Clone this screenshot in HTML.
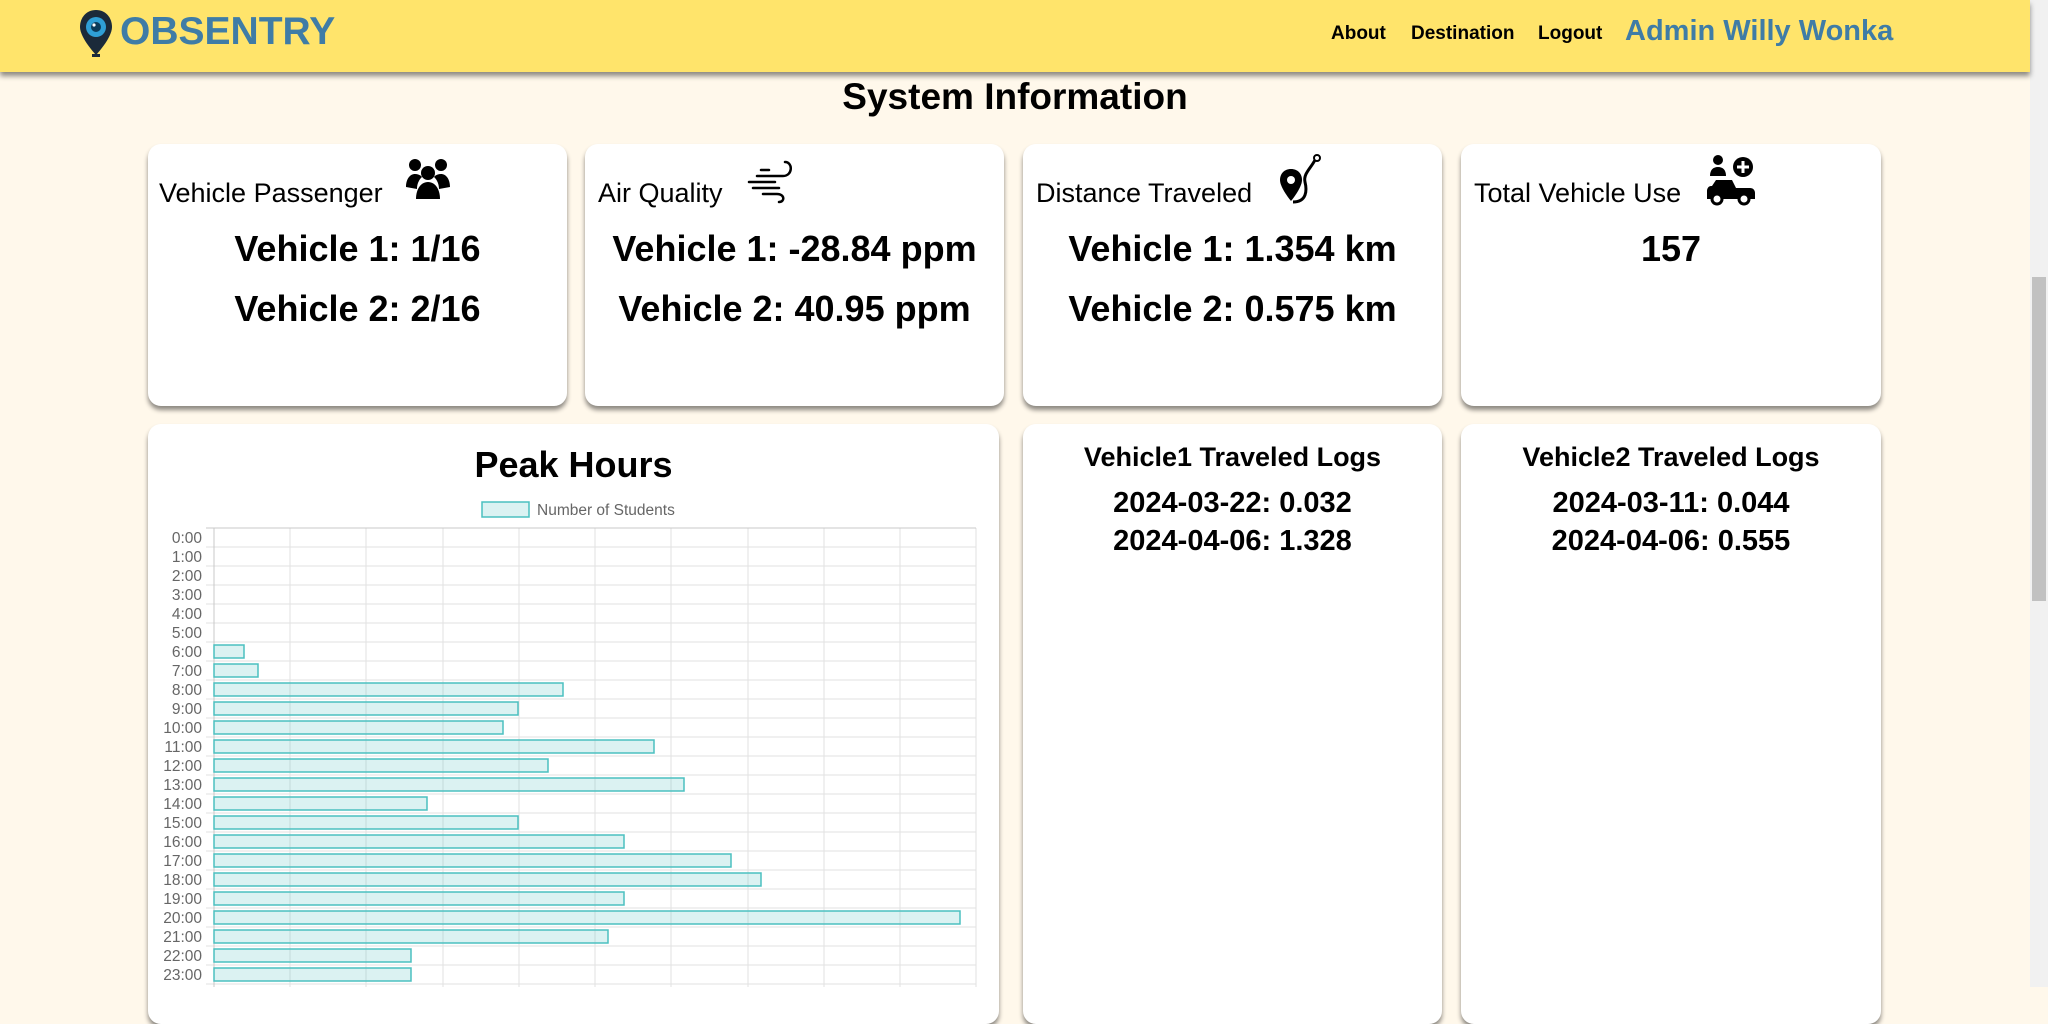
<!DOCTYPE html>
<html><head><meta charset="utf-8"><style>
*{margin:0;padding:0;box-sizing:border-box}
body{width:2048px;height:987px;overflow:hidden;background:#fff8eb;font-family:"Liberation Sans",sans-serif;position:relative;color:#000}
.hdr{position:absolute;left:0;top:0;width:2030px;height:72px;background:#ffe46b;box-shadow:0 4px 5px rgba(0,0,0,.45);z-index:2}
.abs{position:absolute;white-space:nowrap}
.card{position:absolute;background:#fff;border-radius:13px;box-shadow:0 4px 5px rgba(0,0,0,.45)}
.ct{position:absolute;font-size:27px;white-space:nowrap}
.val{position:absolute;left:0;right:0;text-align:center;font-size:36px;font-weight:bold}
.lt{position:absolute;left:0;right:0;text-align:center;font-size:27px;font-weight:bold;top:18px}
.le{position:absolute;left:0;right:0;text-align:center;font-size:29px;font-weight:bold}
.sb{position:absolute;left:2030px;top:0;width:18px;height:987px;background:#f1f1f1}
.th{position:absolute;left:2032px;top:277px;width:14px;height:324px;background:#c1c1c1}
</style></head><body>
<div class="hdr">
<svg class="abs" style="left:78px;top:8px" width="36" height="52" viewBox="0 0 36 52"><path d="M18 2C8 2 2 10 2 19c0 11 16 28 16 28s16-17 16-28C34 10 28 2 18 2z" fill="#1b2a3a"/><circle cx="18" cy="19" r="10" fill="#2f9fd6"/><circle cx="18" cy="19" r="5" fill="#0c3b5a"/><circle cx="16" cy="17" r="1.6" fill="#fff"/><rect x="14" y="46" width="8" height="3" fill="#1b2a3a"/></svg>
<div class="abs" style="left:120px;top:10px;font-size:39px;font-weight:bold;color:#3f7ca6">OBSENTRY</div>
<div class="abs" style="left:1331px;top:23px;font-size:19px;font-weight:bold">About</div>
<div class="abs" style="left:1411px;top:23px;font-size:19px;font-weight:bold">Destination</div>
<div class="abs" style="left:1538px;top:23px;font-size:19px;font-weight:bold">Logout</div>
<div class="abs" style="left:1625px;top:15px;font-size:29px;font-weight:bold;color:#3f7ca6">Admin Willy Wonka</div>
</div>
<div class="sb"></div><div class="th"></div>
<div class="abs" style="left:0;width:2030px;text-align:center;top:76px;font-size:37px;font-weight:bold">System Information</div>

<div class="card" style="left:148px;top:144px;width:419px;height:262px">
<div class="ct" style="left:11px;top:34px">Vehicle Passenger</div>
<svg class="abs" style="left:256px;top:13px" width="48" height="44" viewBox="0 0 48 44"><circle cx="11" cy="8" r="6"/><circle cx="37" cy="8" r="6"/><circle cx="24" cy="16" r="7"/><path d="M2 30c0-8 4-13 9-13s7 3 7 3-5 4-5 12z"/><path d="M46 30c0-8-4-13-9-13s-7 3-7 3 5 4 5 12z"/><path d="M12 42c0-10 5-17 12-17s12 7 12 17z"/></svg>
<div class="val" style="top:84px">Vehicle 1: 1/16</div>
<div class="val" style="top:144px">Vehicle 2: 2/16</div>
</div>
<div class="card" style="left:585px;top:144px;width:419px;height:262px">
<div class="ct" style="left:13px;top:34px">Air Quality</div>
<svg class="abs" style="left:162px;top:16px" width="50" height="44" viewBox="0 0 50 44" fill="none" stroke="#000" stroke-width="2.5" stroke-linecap="round"><path d="M14 10h8M10 16h26c10 0 10-14 2-14"/><path d="M2 22h26M6 28h26"/><path d="M16 34h14c8 0 8 8 2 8"/></svg>
<div class="val" style="top:84px">Vehicle 1: -28.84 ppm</div>
<div class="val" style="top:144px">Vehicle 2: 40.95 ppm</div>
</div>
<div class="card" style="left:1023px;top:144px;width:419px;height:262px">
<div class="ct" style="left:13px;top:34px">Distance Traveled</div>
<svg class="abs" style="left:256px;top:9px" width="44" height="52" viewBox="0 0 44 52"><path d="M12 16C5 16 1 21 1 27c0 8 11 21 11 21s11-13 11-21c0-6-4-11-11-11z"/><circle cx="12" cy="27" r="4" fill="#fff"/><path d="M14 49c14 0 14-12 12-20s6-14 10-22" fill="none" stroke="#000" stroke-width="3"/><circle cx="38" cy="5" r="3" fill="none" stroke="#000" stroke-width="2"/></svg>
<div class="val" style="top:84px">Vehicle 1: 1.354 km</div>
<div class="val" style="top:144px">Vehicle 2: 0.575 km</div>
</div>
<div class="card" style="left:1461px;top:144px;width:420px;height:262px">
<div class="ct" style="left:13px;top:34px">Total Vehicle Use</div>
<svg class="abs" style="left:245px;top:10px" width="50" height="52" viewBox="0 0 50 52"><circle cx="12" cy="6" r="5"/><path d="M4 22c0-6 3-9 8-9s8 3 8 9z"/><circle cx="37" cy="13" r="10"/><path d="M37 7v12M31 13h12" stroke="#fff" stroke-width="3"/><path d="M10 26h16l4 8h14c3 0 5 2 5 5v6H1v-8c0-3 2-5 4-5h1z"/><circle cx="11" cy="45" r="5" fill="#fff" stroke="#000" stroke-width="3"/><circle cx="38" cy="45" r="5" fill="#fff" stroke="#000" stroke-width="3"/></svg>
<div class="val" style="top:84px">157</div>
</div>

<div class="card" style="left:148px;top:424px;width:851px;height:600px">
<div class="abs" style="left:0;right:0;text-align:center;top:20px;font-size:36px;font-weight:bold">Peak Hours</div>
<svg class="abs" style="left:0;top:0" width="851" height="563" font-family="Liberation Sans" font-size="15.5" fill="#666">
<rect x="334" y="78" width="47" height="15" fill="rgba(75,192,192,0.2)" stroke="rgb(75,192,192)" stroke-width="1.5"/>
<text x="389" y="91">Number of Students</text>
<g stroke="#e2e2e2" stroke-width="1">
<line x1="142" y1="104" x2="142" y2="563"/><line x1="218" y1="104" x2="218" y2="563"/><line x1="295" y1="104" x2="295" y2="563"/><line x1="371" y1="104" x2="371" y2="563"/><line x1="447" y1="104" x2="447" y2="563"/><line x1="523" y1="104" x2="523" y2="563"/><line x1="600" y1="104" x2="600" y2="563"/><line x1="676" y1="104" x2="676" y2="563"/><line x1="752" y1="104" x2="752" y2="563"/><line x1="828" y1="104" x2="828" y2="563"/>
<line x1="58" y1="123" x2="828" y2="123"/><line x1="58" y1="142" x2="828" y2="142"/><line x1="58" y1="161" x2="828" y2="161"/><line x1="58" y1="180" x2="828" y2="180"/><line x1="58" y1="199" x2="828" y2="199"/><line x1="58" y1="218" x2="828" y2="218"/><line x1="58" y1="237" x2="828" y2="237"/><line x1="58" y1="256" x2="828" y2="256"/><line x1="58" y1="275" x2="828" y2="275"/><line x1="58" y1="294" x2="828" y2="294"/><line x1="58" y1="313" x2="828" y2="313"/><line x1="58" y1="332" x2="828" y2="332"/><line x1="58" y1="351" x2="828" y2="351"/><line x1="58" y1="370" x2="828" y2="370"/><line x1="58" y1="389" x2="828" y2="389"/><line x1="58" y1="408" x2="828" y2="408"/><line x1="58" y1="427" x2="828" y2="427"/><line x1="58" y1="446" x2="828" y2="446"/><line x1="58" y1="465" x2="828" y2="465"/><line x1="58" y1="484" x2="828" y2="484"/><line x1="58" y1="503" x2="828" y2="503"/><line x1="58" y1="522" x2="828" y2="522"/><line x1="58" y1="541" x2="828" y2="541"/><line x1="58" y1="560" x2="828" y2="560"/>
</g>
<line x1="58" y1="104" x2="828" y2="104" stroke="#c8c8c8"/>
<line x1="66" y1="104" x2="66" y2="563" stroke="#c8c8c8"/>
<g text-anchor="end">
<text x="54" y="119">0:00</text><text x="54" y="138">1:00</text><text x="54" y="157">2:00</text><text x="54" y="176">3:00</text><text x="54" y="195">4:00</text><text x="54" y="214">5:00</text><text x="54" y="233">6:00</text><text x="54" y="252">7:00</text><text x="54" y="271">8:00</text><text x="54" y="290">9:00</text><text x="54" y="309">10:00</text><text x="54" y="328">11:00</text><text x="54" y="347">12:00</text><text x="54" y="366">13:00</text><text x="54" y="385">14:00</text><text x="54" y="404">15:00</text><text x="54" y="423">16:00</text><text x="54" y="442">17:00</text><text x="54" y="461">18:00</text><text x="54" y="480">19:00</text><text x="54" y="499">20:00</text><text x="54" y="518">21:00</text><text x="54" y="537">22:00</text><text x="54" y="556">23:00</text>
</g>
<g fill="rgba(75,192,192,0.2)" stroke="rgb(75,192,192)" stroke-width="1.5">
<rect x="66" y="221" width="30" height="13"/>
<rect x="66" y="240" width="44" height="13"/>
<rect x="66" y="259" width="349" height="13"/>
<rect x="66" y="278" width="304" height="13"/>
<rect x="66" y="297" width="289" height="13"/>
<rect x="66" y="316" width="440" height="13"/>
<rect x="66" y="335" width="334" height="13"/>
<rect x="66" y="354" width="470" height="13"/>
<rect x="66" y="373" width="213" height="13"/>
<rect x="66" y="392" width="304" height="13"/>
<rect x="66" y="411" width="410" height="13"/>
<rect x="66" y="430" width="517" height="13"/>
<rect x="66" y="449" width="547" height="13"/>
<rect x="66" y="468" width="410" height="13"/>
<rect x="66" y="487" width="746" height="13"/>
<rect x="66" y="506" width="394" height="13"/>
<rect x="66" y="525" width="197" height="13"/>
<rect x="66" y="544" width="197" height="13"/>
</g>
</svg>
</div>

<div class="card" style="left:1023px;top:424px;width:419px;height:600px">
<div class="lt">Vehicle1 Traveled Logs</div>
<div class="le" style="top:63px">2024-03-22: 0.032</div>
<div class="le" style="top:101px">2024-04-06: 1.328</div>
</div>
<div class="card" style="left:1461px;top:424px;width:420px;height:600px">
<div class="lt">Vehicle2 Traveled Logs</div>
<div class="le" style="top:63px">2024-03-11: 0.044</div>
<div class="le" style="top:101px">2024-04-06: 0.555</div>
</div>
</body></html>
